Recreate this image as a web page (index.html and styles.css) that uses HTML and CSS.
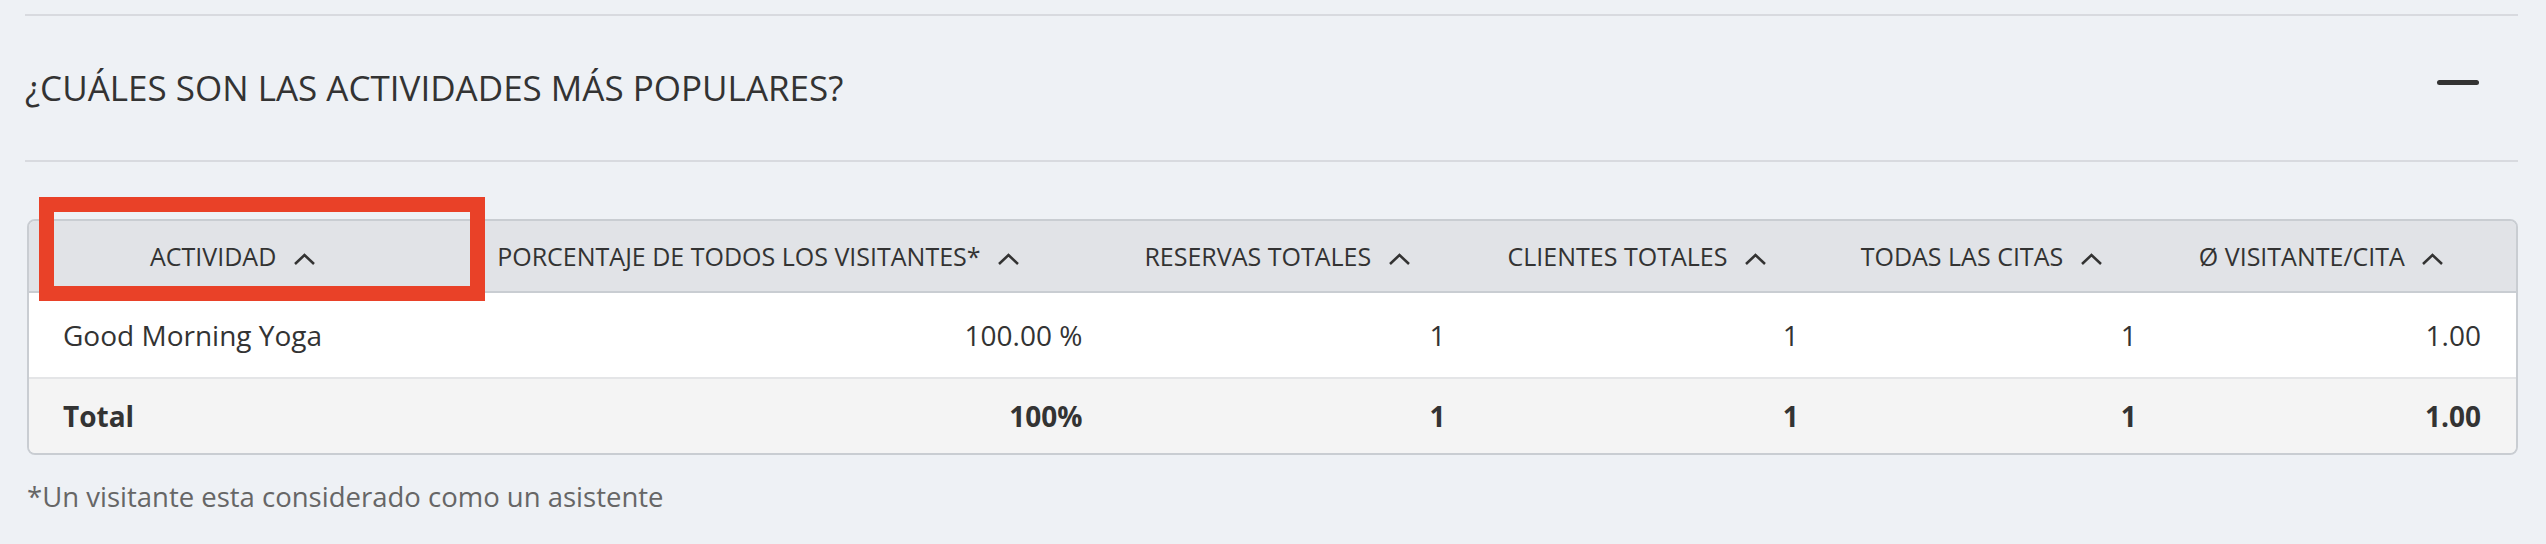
FILE: index.html
```html
<!DOCTYPE html>
<html lang="es">
  <head>
    <meta charset="UTF-8" />
    <meta name="viewport" content="width=device-width, initial-scale=1.0" />
    <title>Actividades populares</title>
    <link rel="stylesheet" href="styles.css">
  </head>
  <body>
    <main class="page">
      <section class="panel">
        <div class="panel-head">
          <h2 class="panel-title">¿CUÁLES SON LAS ACTIVIDADES MÁS POPULARES?</h2>
          <span class="collapse-icon"></span>
        </div>

        <div class="table-wrap">
          <table class="stats">
            <colgroup>
              <col class="c1" />
              <col class="c2" />
              <col class="c3" />
              <col class="c4" />
              <col class="c5" />
              <col class="c6" />
            </colgroup>
            <thead>
              <tr>
                <th class="first">ACTIVIDAD <svg class="sort" viewBox="0 0 23 12"><polyline points="2,11 11.5,2 21,11" /></svg></th>
                <th class="second">PORCENTAJE DE TODOS LOS VISITANTES* <svg class="sort" viewBox="0 0 23 12"><polyline points="2,11 11.5,2 21,11" /></svg></th>
                <th>RESERVAS TOTALES <svg class="sort" viewBox="0 0 23 12"><polyline points="2,11 11.5,2 21,11" /></svg></th>
                <th>CLIENTES TOTALES <svg class="sort" viewBox="0 0 23 12"><polyline points="2,11 11.5,2 21,11" /></svg></th>
                <th>TODAS LAS CITAS <svg class="sort" viewBox="0 0 23 12"><polyline points="2,11 11.5,2 21,11" /></svg></th>
                <th>Ø VISITANTE/CITA <svg class="sort" viewBox="0 0 23 12"><polyline points="2,11 11.5,2 21,11" /></svg></th>
              </tr>
            </thead>
            <tbody>
              <tr class="row">
                <td class="name">Good Morning Yoga</td>
                <td>100.00 %</td>
                <td>1</td>
                <td>1</td>
                <td>1</td>
                <td>1.00</td>
              </tr>
              <tr class="total">
                <td class="name">Total</td>
                <td>100%</td>
                <td>1</td>
                <td>1</td>
                <td>1</td>
                <td>1.00</td>
              </tr>
            </tbody>
          </table>
          <div class="highlight"></div>
        </div>

        <p class="note">*Un visitante esta considerado como un asistente</p>
      </section>
    </main>
  </body>
</html>
```

FILE: styles.css
```css
body {
  margin: 0;
  background-color: rgb(238, 241, 245);
  font-family: "Open Sans", "Liberation Sans", sans-serif;
  color: rgb(51, 51, 51);
}

.page {
  padding: 14px 28px 0 25px;
}

.panel-head {
  display: flex;
  align-items: center;
  justify-content: space-between;
  height: 144px;
  border-top: 2px solid rgb(216, 218, 223);
  border-bottom: 2px solid rgb(216, 218, 223);
}

.panel-title {
  margin: 0;
  font-size: 35px;
  font-weight: 400;
  line-height: 46px;
  color: rgb(51, 51, 51);
}

.collapse-icon {
  width: 42px;
  height: 5px;
  border-radius: 3px;
  background-color: rgb(51, 51, 51);
  margin: 0 39px 11px 0;
}

.table-wrap {
  position: relative;
  margin: 57px 0 0 2px;
}

.stats {
  width: 100%;
  table-layout: fixed;
  border-collapse: separate;
  border-spacing: 0;
  border: 2px solid rgb(201, 205, 210);
  border-radius: 8px;
  overflow: hidden;
}

.c1 { width: 445px; }
.c2 { width: 643px; }
.c3 { width: 363px; }
.c4 { width: 353px; }
.c5 { width: 338px; }
.c6 { width: 344px; }

.stats th {
  height: 70px;
  padding: 0 0 0 27px;
  text-align: left;
  font-size: 25px;
  font-weight: 400;
  white-space: nowrap;
  background-color: rgb(225, 227, 231);
  border-bottom: 2px solid rgb(201, 205, 210);
}

.stats th.first {
  padding-left: 121px;
}

.stats th.second {
  padding-left: 23px;
}

.sort {
  width: 23px;
  height: 12px;
  margin-left: 10px;
  vertical-align: 1px;
}

.sort polyline {
  fill: none;
  stroke: rgb(51, 51, 51);
  stroke-width: 2.5;
}

.stats td {
  padding: 0 35px 0 0;
  text-align: right;
  font-size: 28px;
  white-space: nowrap;
}

.stats td.name {
  text-align: left;
  padding-left: 34px;
}

.row td {
  height: 84px;
  background-color: rgb(255, 255, 255);
  border-bottom: 2px solid rgb(228, 229, 231);
}

.total td {
  height: 74px;
  font-weight: 700;
  background-color: rgb(244, 244, 244);
}

.highlight {
  position: absolute;
  left: 12px;
  top: -22px;
  width: 416px;
  height: 74px;
  border: 15px solid rgb(233, 65, 40);
}

.note {
  margin: 23px 0 0 2px;
  font-size: 27.5px;
  line-height: 38px;
  color: rgb(102, 102, 102);
}
```
